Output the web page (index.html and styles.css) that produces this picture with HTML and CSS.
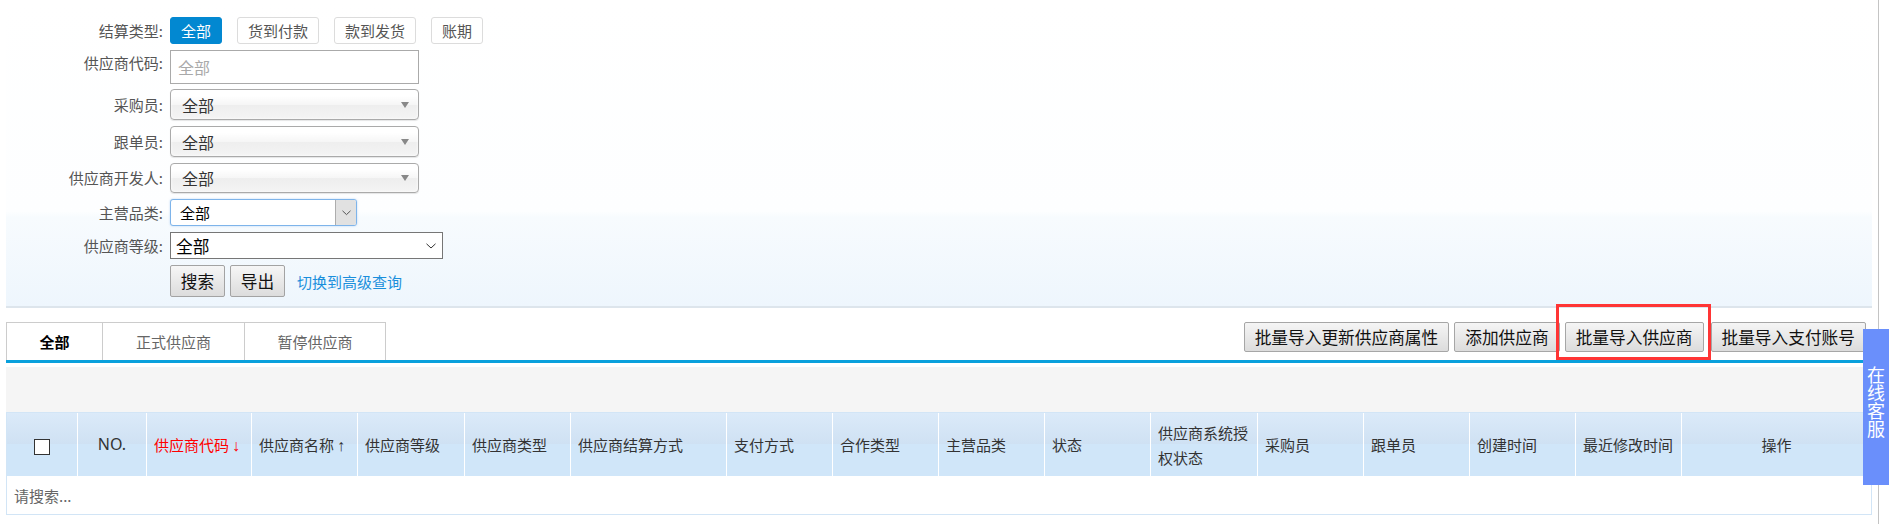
FILE: index.html
```html
<!DOCTYPE html>
<html lang="zh-CN">
<head>
<meta charset="utf-8">
<title>供应商管理</title>
<link rel="stylesheet" href="styles.css">
</head>
<body>
<div class="page">
  <form class="filter">
    <div class="frow h27">
      <span class="flabel">结算类型:</span>
      <div class="seg">
        <span class="segbtn active">全部</span>
        <span class="segbtn">货到付款</span>
        <span class="segbtn">款到发货</span>
        <span class="segbtn">账期</span>
      </div>
    </div>
    <div class="frow h33">
      <span class="flabel lab-top">供应商代码:</span>
      <input class="txt" type="text" placeholder="全部">
    </div>
    <div class="frow h31">
      <span class="flabel">采购员:</span>
      <div class="chosen"><span>全部</span><i class="tri"></i></div>
    </div>
    <div class="frow h31">
      <span class="flabel">跟单员:</span>
      <div class="chosen"><span>全部</span><i class="tri"></i></div>
    </div>
    <div class="frow h30">
      <span class="flabel">供应商开发人:</span>
      <div class="chosen"><span>全部</span><i class="tri"></i></div>
    </div>
    <div class="frow h27">
      <span class="flabel">主营品类:</span>
      <div class="combo">
        <span class="combo-val">全部</span>
        <span class="combo-btn"><svg width="9" height="6" viewBox="0 0 9 6"><polyline points="0.5,0.8 4.5,4.6 8.5,0.8" fill="none" stroke="#555" stroke-width="1"/></svg></span>
      </div>
    </div>
    <div class="frow h27">
      <span class="flabel">供应商等级:</span>
      <div class="nsel">
        <span>全部</span>
        <svg width="10" height="6" viewBox="0 0 10 6"><polyline points="0.5,0.8 5,5 9.5,0.8" fill="none" stroke="#333" stroke-width="1"/></svg>
      </div>
    </div>
    <div class="frow h32">
      <span class="flabel"></span>
      <button type="button" class="sbtn">搜索</button>
      <button type="button" class="sbtn">导出</button>
      <a class="adv" href="#">切换到高级查询</a>
    </div>
  </form>

  <div class="tabbar">
    <div class="tabs">
      <span class="tab t1 active">全部</span>
      <span class="tab t2">正式供应商</span>
      <span class="tab t3">暂停供应商</span>
    </div>
    <div class="actions">
      <button type="button" class="abtn">批量导入更新供应商属性</button>
      <button type="button" class="abtn">添加供应商</button>
      <span class="hl-wrap"><button type="button" class="abtn">批量导入供应商</button><span class="hl"></span></span>
      <button type="button" class="abtn last">批量导入支付账号</button>
    </div>
  </div>

  <div class="toolbar"></div>

  <table class="grid">
    <colgroup>
      <col class="w70"><col class="w69"><col class="w105"><col class="w106"><col class="w107"><col class="w106"><col class="w156"><col class="w106"><col class="w106"><col class="w106"><col class="w106"><col class="w107"><col class="w106"><col class="w106"><col class="w106"><col class="w106"><col class="w190">
    </colgroup>
    <thead>
      <tr>
        <th class="c"><span class="cb"></span></th>
        <th class="c no">NO.</th>
        <th class="sorted nw">供应商代码<span class="arr">↓</span></th>
        <th class="nw">供应商名称<span class="arr">↑</span></th>
        <th class="nw">供应商等级</th>
        <th class="nw">供应商类型</th>
        <th class="nw">供应商结算方式</th>
        <th class="nw">支付方式</th>
        <th class="nw">合作类型</th>
        <th class="nw">主营品类</th>
        <th class="nw">状态</th>
        <th>供应商系统授权状态</th>
        <th class="nw">采购员</th>
        <th class="nw">跟单员</th>
        <th class="nw">创建时间</th>
        <th class="nw">最近修改时间</th>
        <th class="c">操作</th>
      </tr>
    </thead>
    <tbody>
      <tr><td colspan="17" class="empty">请搜索...</td></tr>
    </tbody>
  </table>
</div>
<div class="vline"></div>
<div class="service">在线客服</div>
</body>
</html>
```

FILE: styles.css
```css
* { box-sizing: border-box; }

body {
  margin: 0;
  background: #fff;
  color: #333;
  font-family: "Noto Sans CJK SC", "Noto Sans", sans-serif;
  font-size: 15px;
}

.page {
  margin-left: 6px;
  width: 1866px;
}

/* ---------- filter ---------- */
.filter {
  display: flex;
  flex-direction: column;
  gap: 6px;
  padding: 17px 0 9px;
  margin: 0;
  background: linear-gradient(#ffffff 0%, #fdfeff 69%, #f7fbfe 71%, #eef6fd 100%);
  border-bottom: 2px solid #dde5ec;
}

.frow {
  display: flex;
  align-items: center;
}
.h27 { height: 27px; }
.h30 { height: 30px; }
.h31 { height: 31px; }
.h32 { height: 32px; }
.h33 { height: 33px; }

.flabel {
  width: 157px;
  margin-right: 7px;
  text-align: right;
  color: #555;
  font-size: 15px;
  line-height: 20px;
  white-space: nowrap;
}
.lab-top { align-self: flex-start; margin-top: 3px; }

.seg {
  display: flex;
  gap: 15px;
}
.segbtn {
  height: 27px;
  padding: 0 10px;
  border: 1px solid #dcdcdc;
  border-radius: 3px;
  background: #fff;
  color: #555;
  font-size: 15px;
  line-height: 25px;
}
.segbtn.active {
  background: #0288d1;
  border-color: #0288d1;
  color: #fff;
}

.txt {
  width: 249px;
  height: 34px;
  margin: 0;
  padding: 0 7px;
  border: 1px solid #aaa;
  background: #fff;
  font-family: inherit;
  font-size: 16px;
  color: #333;
  outline: none;
}
.txt::placeholder { color: #a9a9a9; }

.chosen {
  width: 249px;
  height: 100%;
  display: flex;
  align-items: center;
  justify-content: space-between;
  padding: 0 9px 0 11px;
  border: 1px solid #aaa;
  border-radius: 4px;
  background: linear-gradient(#ffffff 20%, #f6f6f6 50%, #eeeeee 52%, #f4f4f4 100%);
  box-shadow: inset 0 0 3px #fff, 0 1px 1px rgba(0,0,0,0.1);
  font-size: 16px;
  color: #333;
}
.tri {
  width: 0;
  height: 0;
  border-left: 4px solid transparent;
  border-right: 4px solid transparent;
  border-top: 6px solid #888;
}

.combo {
  width: 187px;
  height: 27px;
  display: flex;
  align-items: stretch;
  border: 1px solid #7eb4ea;
  border-radius: 3px;
  background: #fff;
  box-shadow: 0 0 2px rgba(126,180,234,0.6);
  overflow: hidden;
}
.combo-val {
  flex: 1;
  padding-left: 9px;
  font-size: 15px;
  line-height: 25px;
  color: #000;
}
.combo-btn {
  width: 21px;
  display: flex;
  align-items: center;
  justify-content: center;
  background: #e1e1e1;
  border-left: 1px solid #adadad;
}

.nsel {
  width: 273px;
  height: 27px;
  display: flex;
  align-items: center;
  justify-content: space-between;
  padding: 0 6px 0 5px;
  border: 1px solid #767676;
  background: #fff;
  font-size: 16.7px;
  color: #000;
}

.sbtn {
  width: 55px;
  height: 32px;
  margin: 0 5px 0 0;
  padding: 0;
  border: 1px solid #a3a3a3;
  border-radius: 2px;
  background: linear-gradient(#f6f6f6, #dcdcdc);
  font-family: inherit;
  font-size: 16.7px;
  color: #111;
}
.adv {
  margin-left: 7px;
  color: #1a8fdc;
  font-size: 15px;
  text-decoration: none;
}

/* ---------- tabs & actions ---------- */
.tabbar {
  margin-top: 14px;
  display: flex;
  justify-content: space-between;
  align-items: flex-start;
  border-bottom: 3px solid #09a0dc;
}
.tabs {
  display: flex;
  height: 38px;
  border-left: 1px solid #ccc;
}
.tab {
  height: 38px;
  border-top: 1px solid #ccc;
  border-right: 1px solid #ccc;
  text-align: center;
  line-height: 37px;
  color: #666;
  font-size: 15px;
}
.tab.active { color: #000; font-weight: bold; }
.t1 { width: 96px; }
.t2 { width: 142px; }
.t3 { width: 141px; }

.actions {
  display: flex;
  gap: 5px;
  margin-right: 6px;
}
.abtn {
  height: 30px;
  margin: 0;
  padding: 0 10px;
  border: 1px solid #a6a6a6;
  border-radius: 2px;
  background: linear-gradient(#f5f5f5, #dcdcdc);
  font-family: inherit;
  font-size: 16.7px;
  line-height: 28px;
  color: #111;
  white-space: nowrap;
}
.abtn.last { margin-left: 2px; }
.hl-wrap {
  position: relative;
  display: flex;
}
.hl {
  position: absolute;
  left: -9px;
  right: -7px;
  top: -18px;
  bottom: -8px;
  border: 3px solid #ff3535;
  pointer-events: none;
}

.toolbar {
  margin-top: 4px;
  height: 45px;
  background: #f5f5f5;
}

/* ---------- grid ---------- */
.grid {
  width: 1866px;
  table-layout: fixed;
  border-collapse: separate;
  border-spacing: 0;
  border: 1px solid #d2e5f6;
}
.w70 { width: 70px; }
.w69 { width: 69px; }
.w105 { width: 105px; }
.w106 { width: 106px; }
.w107 { width: 107px; }
.w156 { width: 156px; }
.w190 { width: 190px; }

.grid th {
  height: 63px;
  padding: 0 4px 0 7px;
  text-align: left;
  vertical-align: middle;
  font-weight: normal;
  font-size: 15px;
  line-height: 25px;
  color: #333;
  background: linear-gradient(#dbeaf9 0%, #cfe1f3 50%, #d0e6f9 50%, #d0e6f9 100%);
  border-left: 1px solid #fff;
}
.grid th:first-child { border-left: none; }
.grid th.nw { white-space: nowrap; }
.grid th.c { text-align: center; padding: 0; }
.grid th.no { font-family: "Noto Sans", sans-serif; font-size: 16px; }
.grid th.sorted { color: #f00; }
.arr {
  margin-left: 3px;
  font-family: "Liberation Sans", "DejaVu Sans", sans-serif;
  font-size: 16px;
}

.cb {
  display: inline-block;
  width: 16px;
  height: 16px;
  border: 1.5px solid #333;
  background: #fff;
  vertical-align: middle;
}

.grid td.empty {
  height: 38px;
  padding: 0 7px;
  color: #666;
  font-size: 15px;
  background: #fff;
}

/* ---------- page edge ---------- */
.vline {
  position: fixed;
  left: 1878px;
  top: 0;
  bottom: 0;
  width: 1px;
  background: #c4c4c4;
}
.service {
  position: fixed;
  right: 0;
  top: 329px;
  width: 26px;
  height: 156px;
  padding-top: 37px;
  background: #6a8ffb;
  color: #fff;
  font-size: 18px;
  line-height: 26px;
  writing-mode: vertical-rl;
  text-orientation: upright;
}
```
